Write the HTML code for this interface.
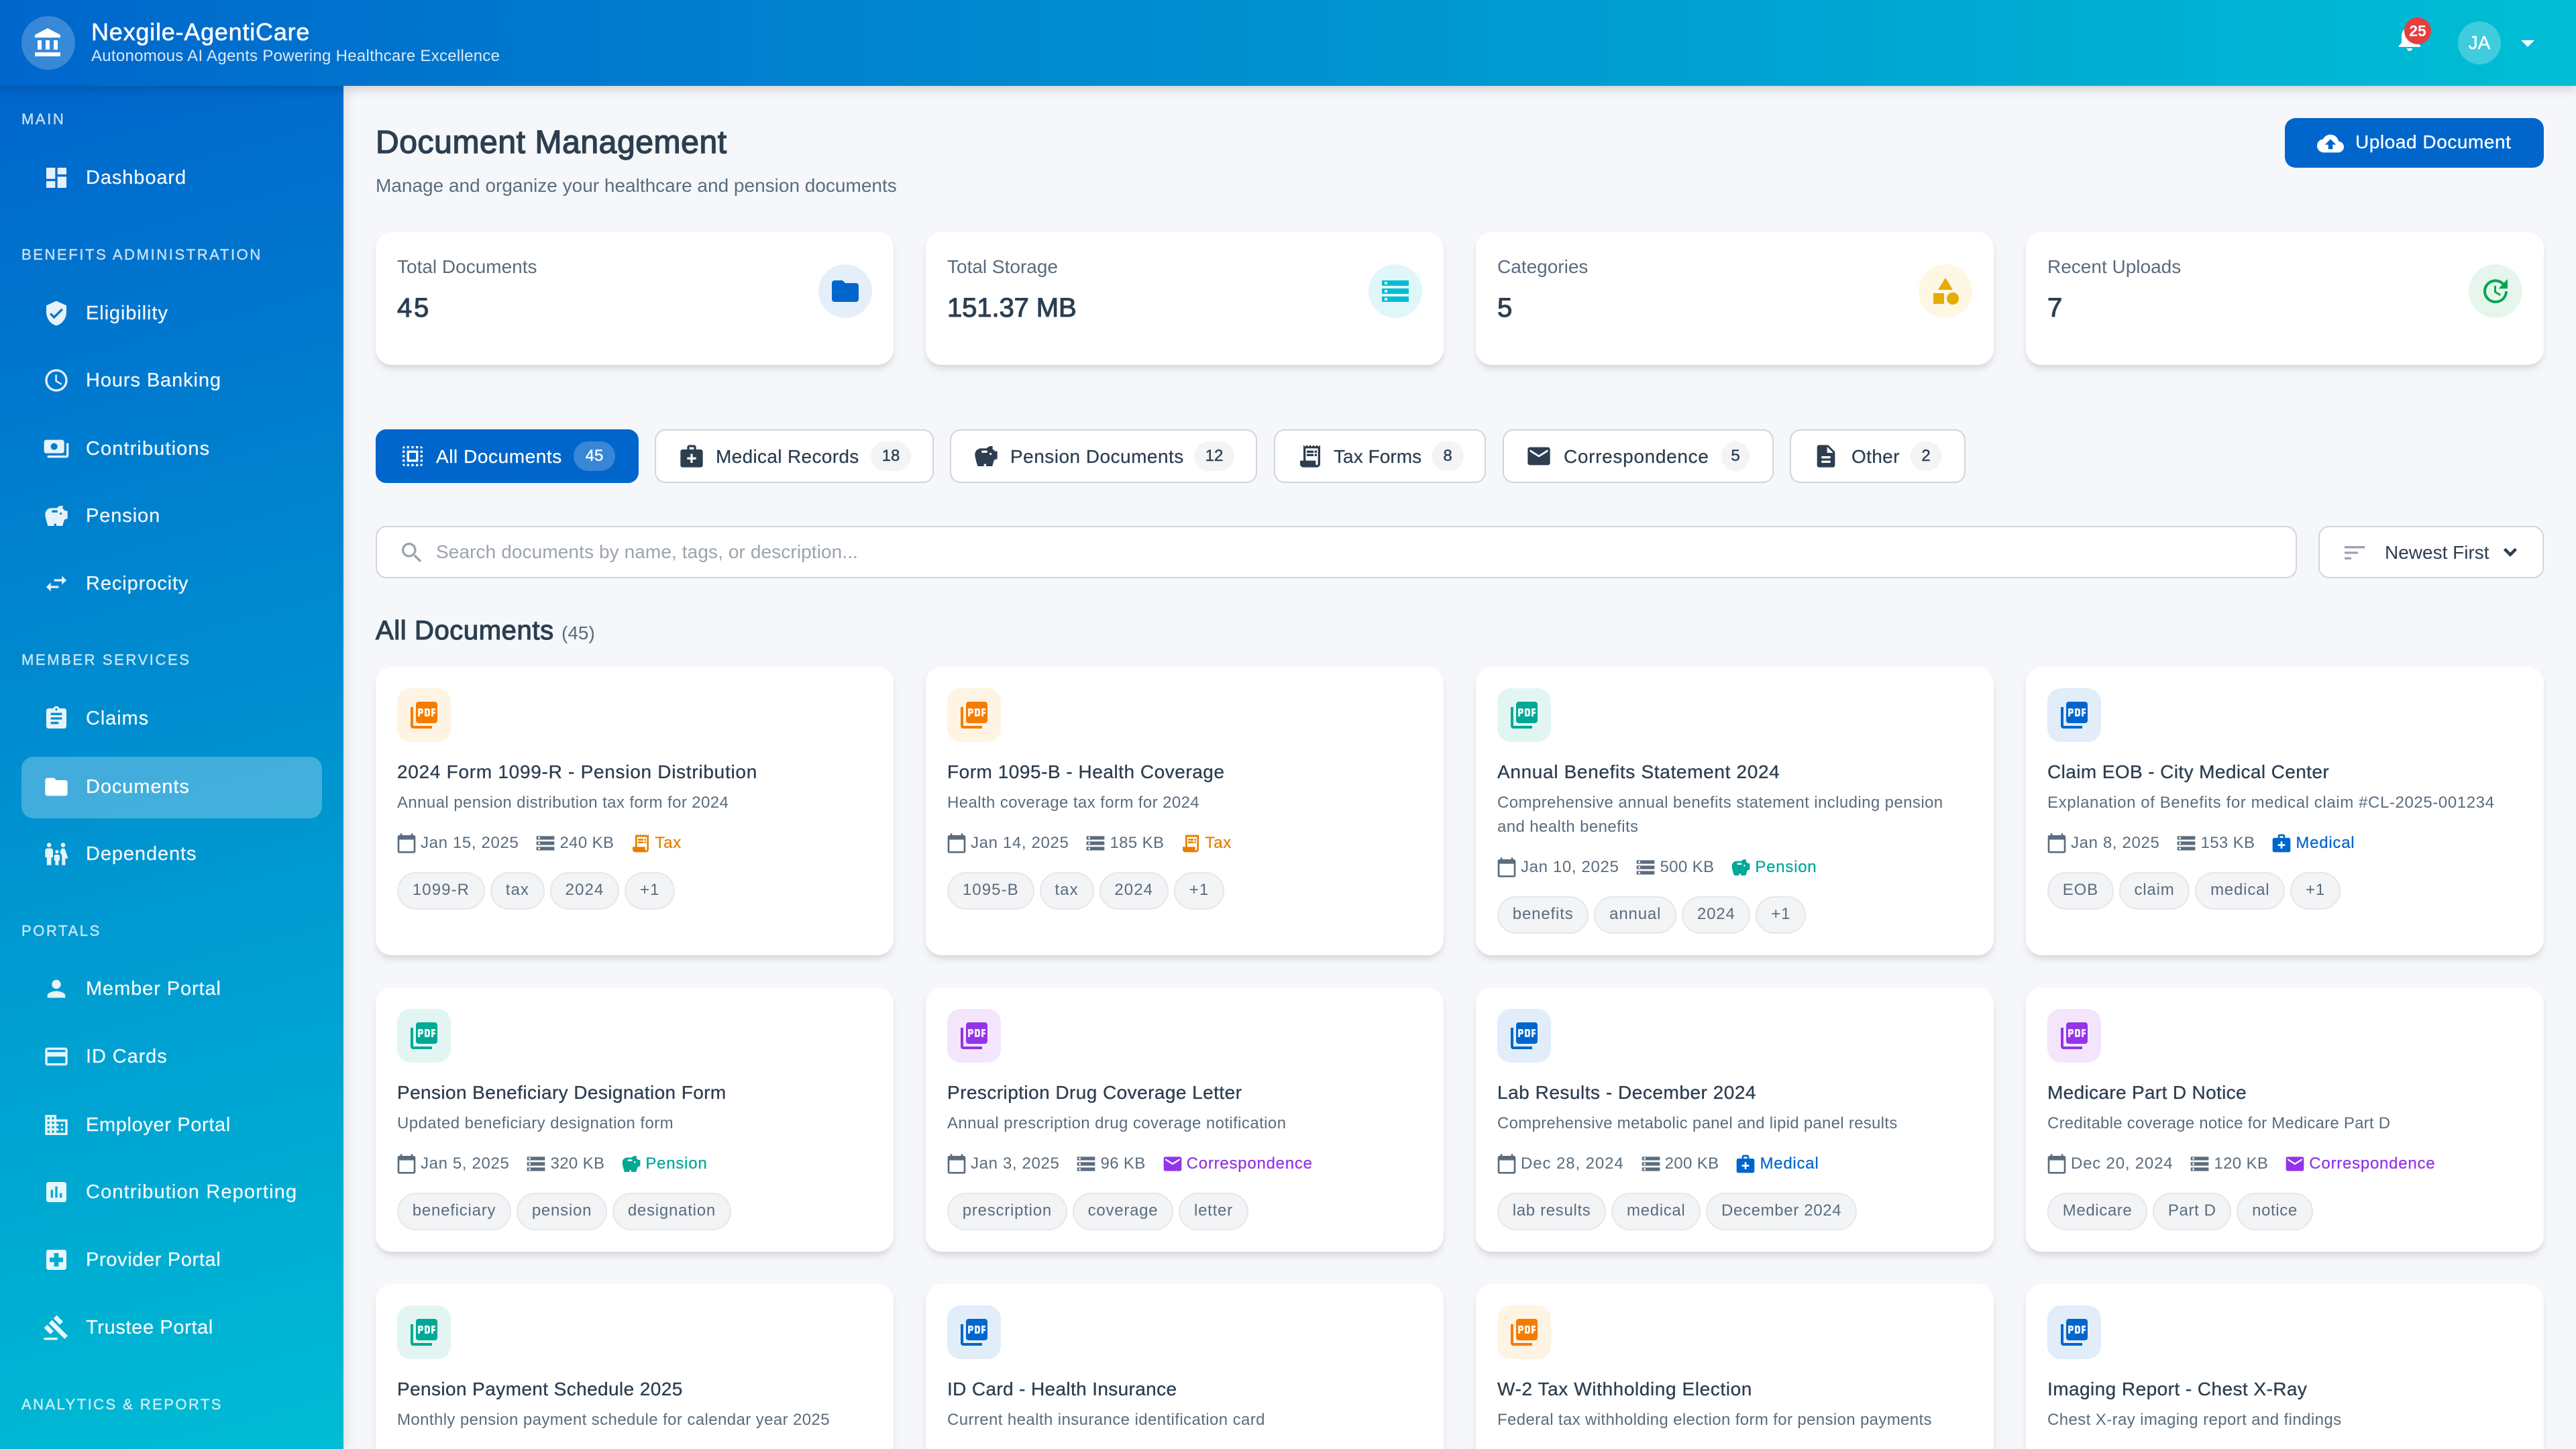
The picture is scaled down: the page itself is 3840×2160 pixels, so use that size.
<!DOCTYPE html>
<html lang="en">
<head>
<meta charset="utf-8">
<title>Document Management</title>
<style>
html,body{margin:0;padding:0;overflow:hidden;background:#f5f7fa}
html{width:3840px;height:2160px}
body{width:1920px;height:1080px;zoom:2;position:relative;font-family:"Liberation Sans",Arial,sans-serif;color:#2c3e50}
svg{display:block;fill:currentColor;flex:none}
#hd{position:absolute;left:0;top:0;width:1920px;height:64px;background:linear-gradient(90deg,#0066cc 0%,#00bcd4 98%);box-shadow:0 2px 8px rgba(0,0,0,.18);z-index:5;color:#fff}
#hd>*{position:absolute}
#sb{position:absolute;left:0;top:64px;width:256px;height:1016px;background:linear-gradient(165deg,#0066cc 0%,#00bcd4 100%);box-shadow:2px 0 8px rgba(0,0,0,.1);z-index:3;color:#fff;overflow:hidden}
.lb{position:absolute;left:16px;height:16px;line-height:16px;font-size:11px;letter-spacing:1.3px;color:rgba(255,255,255,.75);-webkit-text-stroke:.2px rgba(255,255,255,.75);white-space:nowrap}
.it{position:absolute;left:0;margin-top:.4px;width:256px;height:24px;color:#fff}
.it svg{position:absolute;left:32px;top:2px;width:20px;height:20px;opacity:.9}
.it span{position:absolute;left:64px;top:0;line-height:24px;font-size:14.5px;letter-spacing:.45px;white-space:nowrap;opacity:.95;-webkit-text-stroke:.12px #fff}
.act{position:absolute;left:16px;top:500px;width:224px;height:46px;border-radius:9px;background:rgba(255,255,255,.26)}
.stat,.card{position:absolute;width:386px;background:#fff;border-radius:12px;box-shadow:0 4px 6px -1px rgba(0,0,0,.1),0 2px 4px -1px rgba(0,0,0,.06)}
.stat{top:173px;height:99px}
.sl{position:absolute;left:16px;top:16px;line-height:20px;font-size:14px;color:#5a6c7d}
.sv{position:absolute;left:16px;top:43.5px;line-height:26px;font-size:20px;-webkit-text-stroke:.55px #2c3e50;color:#2c3e50;white-space:nowrap}
.sc{position:absolute;left:330px;top:24px;width:40px;height:40px;border-radius:50%;display:flex;align-items:center;justify-content:center}
.sc svg{width:24px;height:24px}
.tab{position:absolute;top:320px;height:40px;box-sizing:border-box;background:#fff;border:1px solid #d1d5db;border-radius:8px;color:#2c3e50}
.tab.on{background:#0066cc;border-color:#0066cc;color:#fff}
.tab svg{position:absolute;top:9px;width:20px;height:20px}
.tab span{position:absolute;top:0;line-height:39px;font-size:14px;letter-spacing:.17px;white-space:nowrap;-webkit-text-stroke:.12px currentColor}
.tab b{position:absolute;top:8px;height:22px;line-height:22px;border-radius:11px;background:#f3f4f6;text-align:center;font-size:12px;font-weight:400;-webkit-text-stroke:.2px currentColor}
.tab.on b{background:rgba(255,255,255,.22)}
.inp{position:absolute;top:392px;height:39px;box-sizing:border-box;background:#fff;border:1px solid #d1d5db;border-radius:8px}
.card .ib{position:absolute;left:16px;top:16px;width:40px;height:40px;border-radius:10px;display:flex;align-items:center;justify-content:center}
.ib svg{width:24px;height:24px}
.o .ib{background:#fff3e3;color:#f57c00}.g .ib{background:#e3f5f2;color:#00a896}.bl .ib{background:#e1edf9;color:#0066cc}.p .ib{background:#f3e6fc;color:#9333ea}
.o .ct{color:#e67e00}.g .ct{color:#00a896}.bl .ct{color:#0066cc}.p .ct{color:#9333ea}
.t{position:absolute;left:16px;top:68.5px;line-height:20px;font-size:14px;letter-spacing:.26px;-webkit-text-stroke:.16px #2c3e50;color:#2c3e50;white-space:nowrap}
.d{position:absolute;left:16px;top:92.5px;width:354px;line-height:18px;font-size:12px;letter-spacing:.2px;color:#5a6c7d}
.m{position:absolute;left:15px;top:123.5px;height:16px;display:flex;align-items:center;font-size:12px;letter-spacing:.32px;color:#5a6c7d;white-space:nowrap}
.m svg{width:16px;height:16px;margin-right:2.5px}
.m i{font-style:normal;margin-right:12px}
.m i:nth-of-type(2){letter-spacing:.18px}
.m i.ct{letter-spacing:.38px;-webkit-text-stroke:.12px currentColor}
svg.ct{-webkit-text-stroke:0}
.tags{position:absolute;left:16px;top:153px;display:flex;gap:4px;letter-spacing:.38px}
.tags span{display:block;height:28px;box-sizing:border-box;line-height:25px;padding:0 10.4px;border:1px solid #e5e7eb;border-radius:14px;background:#f3f4f6;font-size:12px;color:#5a6c7d;white-space:nowrap}
.x18 .m{top:141.5px}.x18 .tags{top:171px}
.r3{height:123px;border-radius:12px 12px 0 0}
</style>
</head>
<body>
<svg width="0" height="0" style="position:absolute">
<symbol id="bank" viewBox="0 0 24 24"><path d="M4 10v7h3v-7H4zm6 0v7h3v-7h-3zM2 22h19v-3H2v3zm14-12v7h3v-7h-3zm-4.500-9L2 6v2h19V6l-9.500-5z"/></symbol>
<symbol id="dash" viewBox="0 0 24 24"><path d="M3 13h8V3H3v10zm0 8h8v-6H3v6zm10 0h8V11h-8v10zm0-18v6h8V3h-8z"/></symbol>
<symbol id="shield" viewBox="0 0 24 24"><path d="M12 1L3 5v6c0 5.550 3.840 10.740 9 12 5.160-1.260 9-6.450 9-12V5l-9-4zm-2 16l-4-4 1.410-1.410L10 14.170l6.590-6.590L18 9l-8 8z"/></symbol>
<symbol id="clock" viewBox="0 0 24 24"><path d="M11.990 2C6.470 2 2 6.480 2 12s4.470 10 9.990 10C17.520 22 22 17.520 22 12S17.520 2 11.990 2zM12 20c-4.420 0-8-3.580-8-8s3.580-8 8-8 8 3.580 8 8-3.580 8-8 8zm.5-13H11v6l5.250 3.150.75-1.230-4.500-2.670z"/></symbol>
<symbol id="pay" viewBox="0 0 24 24"><path d="M19 14V6c0-1.100-.9-2-2-2H3c-1.100 0-2 .9-2 2v8c0 1.100.9 2 2 2h14c1.100 0 2-.9 2-2zm-9-1c-1.660 0-3-1.340-3-3s1.340-3 3-3 3 1.340 3 3-1.340 3-3 3zm13-6v11c0 1.100-.9 2-2 2H4v-2h17V7h2z"/></symbol>
<symbol id="pig" viewBox="0 0 24 24"><path d="M19.830 7.500l-2.270-2.270c.07-.42.18-.81.32-1.150.24-.54-.15-1.080-.63-1.080H16.500c-1.640 0-3.090.79-4 2h-5C4.460 5 2 7.460 2 10.500 2 13.500 4.500 21 4.500 21H10v-2h2v2h5.500l1.680-5.590L22 14.470V7.500h-2.170zM13 9H8V7h5v2zm3 2c-.55 0-1-.45-1-1s.45-1 1-1 1 .45 1 1-.45 1-1 1z"/></symbol>
<symbol id="swap" viewBox="0 0 24 24"><path d="M6.990 11L3 15l3.990 4v-3H14v-2H6.990v-3zM21 9l-4-4v3h-7v2h7v3l4-4z"/></symbol>
<symbol id="assign" viewBox="0 0 24 24"><path d="M19 3h-4.180C14.400 1.840 13.300 1 12 1c-1.300 0-2.400.84-2.820 2H5c-1.100 0-2 .9-2 2v14c0 1.100.9 2 2 2h14c1.100 0 2-.9 2-2V5c0-1.100-.9-2-2-2zm-7 0c.55 0 1 .45 1 1s-.45 1-1 1-1-.45-1-1 .45-1 1-1zm2 14H7v-2h7v2zm3-4H7v-2h10v2zm0-4H7V7h10v2z"/></symbol>
<symbol id="folder" viewBox="0 0 24 24"><path d="M10 4H4c-1.100 0-1.990.9-1.990 2L2 18c0 1.100.9 2 2 2h16c1.100 0 2-.9 2-2V8c0-1.100-.9-2-2-2h-8l-2-2z"/></symbol>
<symbol id="family" viewBox="0 0 24 24"><path d="M16 4c0-1.110.89-2 2-2s2 .89 2 2-.89 2-2 2-2-.89-2-2zm4 18v-6h2.500l-2.540-7.630A2.010 2.010 0 0 0 18.060 7h-.12c-.86 0-1.630.54-1.900 1.370l-.86 2.580c1.080.6 1.820 1.730 1.820 3.050v8h3zm-7.500-10.500c.83 0 1.500-.67 1.500-1.500s-.67-1.500-1.500-1.500S11 9.170 11 10s.67 1.500 1.500 1.500zM5.500 6c1.110 0 2-.89 2-2s-.89-2-2-2-2 .89-2 2 .89 2 2 2zm2 16v-7H9V9c0-1.100-.9-2-2-2H4c-1.100 0-2 .9-2 2v6h1.500v7h4zm6.500 0v-4h1v-4c0-.82-.68-1.500-1.500-1.500h-2c-.82 0-1.500.68-1.500 1.500v4h1v4h3z"/></symbol>
<symbol id="person" viewBox="0 0 24 24"><path d="M12 12c2.210 0 4-1.790 4-4s-1.790-4-4-4-4 1.790-4 4 1.790 4 4 4zm0 2c-2.670 0-8 1.340-8 4v2h16v-2c0-2.660-5.330-4-8-4z"/></symbol>
<symbol id="cardi" viewBox="0 0 24 24"><path d="M20 4H4c-1.110 0-1.990.89-1.990 2L2 18c0 1.110.89 2 2 2h16c1.110 0 2-.89 2-2V6c0-1.110-.89-2-2-2zm0 14H4v-6h16v6zm0-10H4V6h16v2z"/></symbol>
<symbol id="biz" viewBox="0 0 24 24"><path d="M12 7V3H2v18h20V7H12zM6 19H4v-2h2v2zm0-4H4v-2h2v2zm0-4H4V9h2v2zm0-4H4V5h2v2zm4 12H8v-2h2v2zm0-4H8v-2h2v2zm0-4H8V9h2v2zm0-4H8V5h2v2zm10 12h-8v-2h2v-2h-2v-2h2v-2h-2V9h8v10zm-2-8h-2v2h2v-2zm0 4h-2v2h2v-2z"/></symbol>
<symbol id="chart" viewBox="0 0 24 24"><path d="M19 3H5c-1.100 0-2 .9-2 2v14c0 1.100.9 2 2 2h14c1.100 0 2-.9 2-2V5c0-1.100-.9-2-2-2zM9 17H7v-7h2v7zm4 0h-2V7h2v10zm4 0h-2v-4h2v4z"/></symbol>
<symbol id="hosp" viewBox="0 0 24 24"><path d="M19 3H5c-1.100 0-1.990.9-1.990 2L3 19c0 1.100.9 2 2 2h14c1.100 0 2-.9 2-2V5c0-1.100-.9-2-2-2zm-1 11h-4v4h-4v-4H6v-4h4V6h4v4h4v4z"/></symbol>
<symbol id="gavel" viewBox="0 0 24 24"><path d="M1 21h12v2H1zM5.245 8.070l2.830-2.827 14.140 14.142-2.828 2.828zM12.317 1l5.657 5.656-2.830 2.830-5.654-5.660zM3.825 9.485l5.657 5.657-2.828 2.828-5.657-5.657z"/></symbol>
<symbol id="bell" viewBox="0 0 24 24"><path d="M12 22c1.100 0 2-.9 2-2h-4c0 1.100.9 2 2 2zm6-6v-5c0-3.070-1.630-5.640-4.500-6.320V4c0-.83-.67-1.500-1.500-1.500s-1.500.67-1.500 1.500v.68C7.640 5.360 6 7.920 6 11v5l-2 2v1h16v-1l-2-2z"/></symbol>
<symbol id="drop" viewBox="0 0 24 24"><path d="M7 10l5 5 5-5z"/></symbol>
<symbol id="cloud" viewBox="0 0 24 24"><path d="M19.350 10.040C18.670 6.590 15.640 4 12 4 9.110 4 6.600 5.640 5.350 8.040 2.340 8.360 0 10.910 0 14c0 3.310 2.690 6 6 6h13c2.760 0 5-2.240 5-5 0-2.640-2.050-4.780-4.650-4.960zM14 13v4h-4v-4H7l5-5 5 5h-3z"/></symbol>
<symbol id="store" viewBox="0 0 24 24"><path d="M2 20h20v-4H2v4zm2-3h2v2H4v-2zM2 4v4h20V4H2zm4 3H4V5h2v2zm-4 7h20v-4H2v4zm2-3h2v2H4v-2z"/></symbol>
<symbol id="cat" viewBox="0 0 24 24"><path d="M12 2l-5.500 9h11z"/><circle cx="17.500" cy="17.500" r="4.500"/><path d="M3 13.500h8v8H3z"/></symbol>
<symbol id="upd" viewBox="0 0 24 24"><path d="M21 10.120h-6.780l2.740-2.820c-2.730-2.700-7.150-2.800-9.880-.1-2.730 2.710-2.730 7.080 0 9.790s7.150 2.710 9.880 0C18.320 15.650 19 14.080 19 12.100h2c0 1.980-.88 4.550-2.640 6.290-3.510 3.480-9.210 3.480-12.720 0-3.500-3.470-3.530-9.110-.02-12.580s9.140-3.470 12.650 0L21 3v7.120zM12.500 8v4.250l3.500 2.080-.72 1.210L11 13V8h1.500z"/></symbol>
<symbol id="selall" viewBox="0 0 24 24"><path d="M3 5h2V3c-1.100 0-2 .9-2 2zm0 8h2v-2H3v2zm4 8h2v-2H7v2zM3 9h2V7H3v2zm10-6h-2v2h2V3zm6 0v2h2c0-1.100-.9-2-2-2zM5 21v-2H3c0 1.100.9 2 2 2zm-2-4h2v-2H3v2zM9 3H7v2h2V3zm2 18h2v-2h-2v2zm8-8h2v-2h-2v2zm0 8c1.100 0 2-.9 2-2h-2v2zm0-12h2V7h-2v2zm0 8h2v-2h-2v2zm-4 4h2v-2h-2v2zm0-16h2V3h-2v2zM7 17h10V7H7v10zm2-8h6v6H9V9z"/></symbol>
<symbol id="med" viewBox="0 0 24 24"><path d="M20 6h-4V4c0-1.100-.9-2-2-2h-4c-1.100 0-2 .9-2 2v2H4c-1.100 0-2 .9-2 2v12c0 1.100.9 2 2 2h16c1.100 0 2-.9 2-2V8c0-1.100-.9-2-2-2zM10 4h4v2h-4V4zm6 11h-3v3h-2v-3H8v-2h3v-3h2v3h3v2z"/></symbol>
<symbol id="rcpt" viewBox="0 0 24 24"><path d="M19.500 3.500L18 2l-1.500 1.500L15 2l-1.500 1.500L12 2l-1.500 1.500L9 2 7.500 3.500 6 2v14H3v3c0 1.660 1.340 3 3 3h12c1.660 0 3-1.340 3-3V2l-1.500 1.500zM19 19c0 .55-.45 1-1 1s-1-.45-1-1v-3H8V5h11v14z"/><path d="M9 7h6v2H9zM16 7h2v2h-2zM9 10h6v2H9zM16 10h2v2h-2z"/></symbol>
<symbol id="mail" viewBox="0 0 24 24"><path d="M20 4H4c-1.100 0-1.990.9-1.990 2L2 18c0 1.100.9 2 2 2h16c1.100 0 2-.9 2-2V6c0-1.100-.9-2-2-2zm0 4l-8 5-8-5V6l8 5 8-5v2z"/></symbol>
<symbol id="desc" viewBox="0 0 24 24"><path d="M14 2H6c-1.100 0-1.990.9-1.990 2L4 20c0 1.100.89 2 1.990 2H18c1.100 0 2-.9 2-2V8l-6-6zm2 16H8v-2h8v2zm0-4H8v-2h8v2zm-3-5V3.500L18.500 9H13z"/></symbol>
<symbol id="search" viewBox="0 0 24 24"><path d="M15.500 14h-.79l-.28-.27C15.410 12.590 16 11.110 16 9.500 16 5.910 13.090 3 9.500 3S3 5.910 3 9.500 5.910 16 9.500 16c1.610 0 3.090-.59 4.230-1.570l.27.28v.79l5 4.990L20.490 19l-4.990-5zm-6 0C7.010 14 5 11.990 5 9.500S7.010 5 9.500 5 14 7.010 14 9.500 11.990 14 9.500 14z"/></symbol>
<symbol id="sort" viewBox="0 0 24 24"><path d="M3 18h6v-2H3v2zM3 6v2h18V6H3zm0 7h12v-2H3v2z"/></symbol>
<symbol id="more" viewBox="0 0 24 24"><path d="M16.590 8.590L12 13.170 7.410 8.590 6 10l6 6 6-6z" stroke="currentColor" stroke-width="1"/></symbol>
<symbol id="cal" viewBox="0 0 24 24"><path d="M20 3h-1V1h-2v2H7V1H5v2H4c-1.100 0-2 .9-2 2v16c0 1.100.9 2 2 2h16c1.100 0 2-.9 2-2V5c0-1.100-.9-2-2-2zm0 18H4V8h16v13z"/></symbol>
<symbol id="pdf" viewBox="0 0 24 24"><path d="M20 2H8c-1.100 0-2 .9-2 2v12c0 1.100.9 2 2 2h12c1.100 0 2-.9 2-2V4c0-1.100-.9-2-2-2zm-8.500 7.500c0 .83-.67 1.500-1.500 1.500H9v2H7.500V7H10c.83 0 1.500.67 1.500 1.500v1zm5 2c0 .83-.67 1.500-1.500 1.500h-2.500V7H15c.83 0 1.500.67 1.500 1.500v3zm4-3H19v1h1.500V11H19v2h-1.500V7h3v1.500zM9 9.500h1v-1H9v1zM4 6H2v14c0 1.100.9 2 2 2h14v-2H4V6zm10 5.500h1v-3h-1v3z"/></symbol>
</svg>

<div id="hd">
  <div style="left:16px;top:12px;width:40px;height:40px;border-radius:50%;background:rgba(255,255,255,.22)"></div>
  <svg style="left:24px;top:20px;width:24px;height:24px"><use href="#bank"/></svg>
  <div style="left:68px;top:13px;line-height:22px;font-size:18px;letter-spacing:.39px;-webkit-text-stroke:.3px #fff;white-space:nowrap">Nexgile-AgentiCare</div>
  <div style="left:68px;top:34px;line-height:16px;font-size:12px;letter-spacing:.14px;opacity:.85;white-space:nowrap">Autonomous AI Agents Powering Healthcare Excellence</div>
  <svg style="left:1784px;top:16px;width:24px;height:24px"><use href="#bell"/></svg>
  <div style="left:1792px;top:13px;width:20px;height:20px;border-radius:50%;background:#e53e3e;text-align:center;line-height:20px;font-size:11.500px;font-weight:700">25</div>
  <div style="left:1832px;top:16px;width:32px;height:32px;border-radius:50%;background:rgba(255,255,255,.25);text-align:center;line-height:32px;font-size:14px;-webkit-text-stroke:.2px #fff">JA</div>
  <svg style="left:1872px;top:20px;width:24px;height:24px"><use href="#drop"/></svg>
</div>

<div id="sb">
  <div class="lb" style="top:17px">MAIN</div>
  <div class="it" style="top:56px"><svg><use href="#dash"/></svg><span>Dashboard</span></div>
  <div class="lb" style="top:118px">BENEFITS ADMINISTRATION</div>
  <div class="it" style="top:157px"><svg><use href="#shield"/></svg><span>Eligibility</span></div>
  <div class="it" style="top:207.100px"><svg><use href="#clock"/></svg><span>Hours Banking</span></div>
  <div class="it" style="top:258.100px"><svg><use href="#pay"/></svg><span style="letter-spacing:.55px">Contributions</span></div>
  <div class="it" style="top:308px"><svg><use href="#pig"/></svg><span>Pension</span></div>
  <div class="it" style="top:358.600px"><svg><use href="#swap"/></svg><span>Reciprocity</span></div>
  <div class="lb" style="top:419.900px">MEMBER SERVICES</div>
  <div class="it" style="top:459px"><svg><use href="#assign"/></svg><span>Claims</span></div>
  <div class="act"></div>
  <div class="it" style="top:510px"><svg style="opacity:1"><use href="#folder"/></svg><span style="opacity:1">Documents</span></div>
  <div class="it" style="top:560px"><svg><use href="#family"/></svg><span>Dependents</span></div>
  <div class="lb" style="top:621.900px">PORTALS</div>
  <div class="it" style="top:660.500px"><svg><use href="#person"/></svg><span>Member Portal</span></div>
  <div class="it" style="top:711px"><svg><use href="#cardi"/></svg><span>ID Cards</span></div>
  <div class="it" style="top:762px"><svg><use href="#biz"/></svg><span style="letter-spacing:.32px">Employer Portal</span></div>
  <div class="it" style="top:812px"><svg><use href="#chart"/></svg><span style="letter-spacing:.57px">Contribution Reporting</span></div>
  <div class="it" style="top:862.500px"><svg><use href="#hosp"/></svg><span style="letter-spacing:.32px">Provider Portal</span></div>
  <div class="it" style="top:913px"><svg><use href="#gavel"/></svg><span style="letter-spacing:.32px">Trustee Portal</span></div>
  <div class="lb" style="top:974.900px;letter-spacing:1.22px">ANALYTICS &amp; REPORTS</div>
</div>

<div style="position:absolute;left:280px;top:91.500px;line-height:30px;font-size:24px;letter-spacing:.3px;-webkit-text-stroke:.7px #2c3e50;white-space:nowrap">Document Management</div>
<div style="position:absolute;left:280px;top:128.500px;line-height:20px;font-size:14px;color:#5a6c7d;white-space:nowrap">Manage and organize your healthcare and pension documents</div>

<div style="position:absolute;left:1703px;top:88px;width:193px;height:37px;border-radius:8px;background:#0066cc;color:#fff">
  <svg style="position:absolute;left:24px;top:9px;width:20px;height:20px"><use href="#cloud"/></svg>
  <div style="position:absolute;left:52.500px;top:0;line-height:36px;font-size:14px;letter-spacing:.28px;-webkit-text-stroke:.15px #fff;white-space:nowrap">Upload Document</div>
</div>

<div class="stat" style="left:280px"><div class="sl">Total Documents</div><div class="sv" style="letter-spacing:1.4px">45</div><div class="sc" style="background:#e5eff9;color:#0066cc"><svg><use href="#folder"/></svg></div></div>
<div class="stat" style="left:690px"><div class="sl">Total Storage</div><div class="sv" style="letter-spacing:-.05px">151.37 MB</div><div class="sc" style="background:#e0f7fa;color:#00bcd4"><svg><use href="#store"/></svg></div></div>
<div class="stat" style="left:1100px"><div class="sl">Categories</div><div class="sv">5</div><div class="sc" style="background:#fdf7e3;color:#e6ac00"><svg><use href="#cat"/></svg></div></div>
<div class="stat" style="left:1510px"><div class="sl">Recent Uploads</div><div class="sv">7</div><div class="sc" style="background:#e6f6ed;color:#00a651"><svg><use href="#upd"/></svg></div></div>

<div class="tab on" style="left:280px;width:196px"><svg style="left:16.500px"><use href="#selall"/></svg><span style="left:44px;letter-spacing:.28px">All Documents</span><b style="left:146.500px;width:31px">45</b></div>
<div class="tab" style="left:488px;width:208px"><svg style="left:16.500px"><use href="#med"/></svg><span style="left:44.500px">Medical Records</span><b style="left:160px;width:30px">18</b></div>
<div class="tab" style="left:708px;width:229px"><svg style="left:16px"><use href="#pig"/></svg><span style="left:44px;letter-spacing:.24px">Pension Documents</span><b style="left:181px;width:30px">12</b></div>
<div class="tab" style="left:949.500px;width:158px"><svg style="left:16px"><use href="#rcpt"/></svg><span style="left:43.500px;letter-spacing:.03px">Tax Forms</span><b style="left:116.500px;width:24px">8</b></div>
<div class="tab" style="left:1120px;width:202px"><svg style="left:16px"><use href="#mail"/></svg><span style="left:44.500px;letter-spacing:.34px">Correspondence</span><b style="left:162px;width:21px">5</b></div>
<div class="tab" style="left:1334px;width:131px"><svg style="left:16px"><use href="#desc"/></svg><span style="left:45px">Other</span><b style="left:89px;width:23px">2</b></div>

<div class="inp" style="left:280px;width:1432px">
  <svg style="position:absolute;left:16px;top:9px;width:20px;height:20px;color:#9ca3af"><use href="#search"/></svg>
  <div style="position:absolute;left:44px;top:0;line-height:37px;font-size:14px;letter-spacing:.05px;color:#9ca3af;white-space:nowrap">Search documents by name, tags, or description...</div>
</div>
<div class="inp" style="left:1728px;width:168px">
  <svg style="position:absolute;left:16px;top:9px;width:20px;height:20px;color:#9ca3af"><use href="#sort"/></svg>
  <div style="position:absolute;left:48.500px;top:.5px;line-height:37px;font-size:14px;white-space:nowrap">Newest First</div>
  <svg style="position:absolute;left:133px;top:9.500px;width:18px;height:18px"><use href="#more"/></svg>
</div>

<div style="position:absolute;left:280px;top:457px;line-height:26px;font-size:20px;letter-spacing:.3px;-webkit-text-stroke:.6px #2c3e50;white-space:nowrap">All Documents</div>
<div style="position:absolute;left:418.500px;top:462px;line-height:20px;font-size:14px;color:#5a6c7d;white-space:nowrap">(45)</div>

<!-- Row 1 -->
<div class="card o" style="left:280px;top:497px;height:215px"><div class="ib"><svg><use href="#pdf"/></svg></div><div class="t" style="letter-spacing:.36px">2024 Form 1099-R - Pension Distribution</div><div class="d">Annual pension distribution tax form for 2024</div><div class="m"><svg><use href="#cal"/></svg><i>Jan 15, 2025</i><svg><use href="#store"/></svg><i>240 KB</i><svg class="ct"><use href="#rcpt"/></svg><i class="ct">Tax</i></div><div class="tags" style="letter-spacing:.55px"><span>1099-R</span><span>tax</span><span>2024</span><span>+1</span></div></div>
<div class="card o" style="left:690px;top:497px;height:215px"><div class="ib"><svg><use href="#pdf"/></svg></div><div class="t">Form 1095-B - Health Coverage</div><div class="d">Health coverage tax form for 2024</div><div class="m"><svg><use href="#cal"/></svg><i>Jan 14, 2025</i><svg><use href="#store"/></svg><i>185 KB</i><svg class="ct"><use href="#rcpt"/></svg><i class="ct">Tax</i></div><div class="tags" style="letter-spacing:.55px"><span>1095-B</span><span>tax</span><span>2024</span><span>+1</span></div></div>
<div class="card g x18" style="left:1100px;top:497px;height:215px"><div class="ib"><svg><use href="#pdf"/></svg></div><div class="t" style="letter-spacing:.33px">Annual Benefits Statement 2024</div><div class="d">Comprehensive annual benefits statement including pension and health benefits</div><div class="m"><svg><use href="#cal"/></svg><i>Jan 10, 2025</i><svg><use href="#store"/></svg><i>500 KB</i><svg class="ct"><use href="#pig"/></svg><i class="ct">Pension</i></div><div class="tags" style="letter-spacing:.42px"><span>benefits</span><span>annual</span><span>2024</span><span>+1</span></div></div>
<div class="card bl" style="left:1510px;top:497px;height:215px"><div class="ib"><svg><use href="#pdf"/></svg></div><div class="t" style="letter-spacing:.2px">Claim EOB - City Medical Center</div><div class="d" style="letter-spacing:.3px">Explanation of Benefits for medical claim #CL-2025-001234</div><div class="m"><svg><use href="#cal"/></svg><i>Jan 8, 2025</i><svg><use href="#store"/></svg><i>153 KB</i><svg class="ct"><use href="#med"/></svg><i class="ct">Medical</i></div><div class="tags" style="letter-spacing:.4px"><span>EOB</span><span>claim</span><span>medical</span><span>+1</span></div></div>

<!-- Row 2 -->
<div class="card g" style="left:280px;top:736px;height:197px"><div class="ib"><svg><use href="#pdf"/></svg></div><div class="t" style="letter-spacing:.2px">Pension Beneficiary Designation Form</div><div class="d">Updated beneficiary designation form</div><div class="m"><svg><use href="#cal"/></svg><i>Jan 5, 2025</i><svg><use href="#store"/></svg><i>320 KB</i><svg class="ct"><use href="#pig"/></svg><i class="ct">Pension</i></div><div class="tags"><span>beneficiary</span><span>pension</span><span>designation</span></div></div>
<div class="card p" style="left:690px;top:736px;height:197px"><div class="ib"><svg><use href="#pdf"/></svg></div><div class="t" style="letter-spacing:.22px">Prescription Drug Coverage Letter</div><div class="d">Annual prescription drug coverage notification</div><div class="m"><svg><use href="#cal"/></svg><i>Jan 3, 2025</i><svg><use href="#store"/></svg><i>96 KB</i><svg class="ct"><use href="#mail"/></svg><i class="ct">Correspondence</i></div><div class="tags"><span>prescription</span><span>coverage</span><span>letter</span></div></div>
<div class="card bl" style="left:1100px;top:736px;height:197px"><div class="ib"><svg><use href="#pdf"/></svg></div><div class="t">Lab Results - December 2024</div><div class="d" style="letter-spacing:.14px">Comprehensive metabolic panel and lipid panel results</div><div class="m"><svg><use href="#cal"/></svg><i style="letter-spacing:.45px">Dec 28, 2024</i><svg><use href="#store"/></svg><i>200 KB</i><svg class="ct"><use href="#med"/></svg><i class="ct">Medical</i></div><div class="tags" style="letter-spacing:.33px"><span>lab results</span><span>medical</span><span>December 2024</span></div></div>
<div class="card p" style="left:1510px;top:736px;height:197px"><div class="ib"><svg><use href="#pdf"/></svg></div><div class="t" style="letter-spacing:.17px">Medicare Part D Notice</div><div class="d" style="letter-spacing:.12px">Creditable coverage notice for Medicare Part D</div><div class="m"><svg><use href="#cal"/></svg><i style="letter-spacing:.4px">Dec 20, 2024</i><svg><use href="#store"/></svg><i>120 KB</i><svg class="ct"><use href="#mail"/></svg><i class="ct">Correspondence</i></div><div class="tags" style="letter-spacing:.3px"><span>Medicare</span><span>Part D</span><span>notice</span></div></div>

<!-- Row 3 -->
<div class="card g r3" style="left:280px;top:957px"><div class="ib"><svg><use href="#pdf"/></svg></div><div class="t" style="letter-spacing:.2px">Pension Payment Schedule 2025</div><div class="d">Monthly pension payment schedule for calendar year 2025</div></div>
<div class="card bl r3" style="left:690px;top:957px"><div class="ib"><svg><use href="#pdf"/></svg></div><div class="t" style="letter-spacing:.18px">ID Card - Health Insurance</div><div class="d">Current health insurance identification card</div></div>
<div class="card o r3" style="left:1100px;top:957px"><div class="ib"><svg><use href="#pdf"/></svg></div><div class="t" style="letter-spacing:.3px">W-2 Tax Withholding Election</div><div class="d" style="letter-spacing:.18px">Federal tax withholding election form for pension payments</div></div>
<div class="card bl r3" style="left:1510px;top:957px"><div class="ib"><svg><use href="#pdf"/></svg></div><div class="t" style="letter-spacing:.22px">Imaging Report - Chest X-Ray</div><div class="d">Chest X-ray imaging report and findings</div></div>
</body>
</html>
